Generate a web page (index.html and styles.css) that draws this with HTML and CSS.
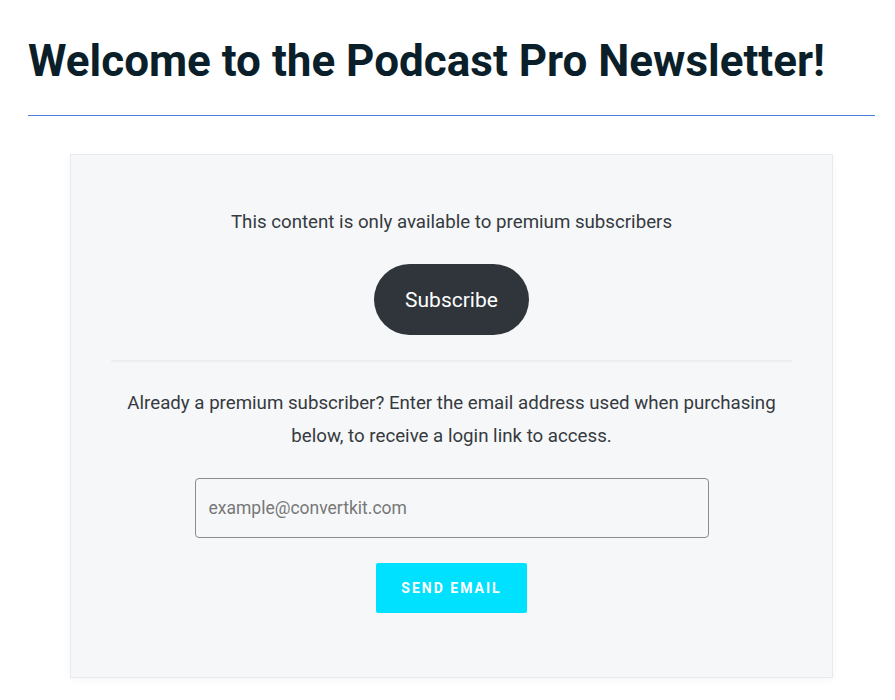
FILE: index.html
```html
<!DOCTYPE html>
<html lang="en">
<head>
<meta charset="utf-8">
<title>Podcast Pro Newsletter</title>
<link rel="stylesheet" href="styles.css">
</head>
<body>
<main class="page">
  <h1 class="title">Welcome to the Podcast Pro Newsletter!</h1>
  <hr class="rule">
  <section class="card">
    <p class="notice">This content is only available to premium subscribers</p>
    <a class="subscribe" href="#">Subscribe</a>
    <div class="divider"></div>
    <p class="info">Already a premium subscriber? Enter the email address used when purchasing below, to receive a login link to access.</p>
    <form class="form">
      <input class="email" type="email" placeholder="example@convertkit.com">
      <button class="send" type="button">SEND EMAIL</button>
    </form>
  </section>
</main>
</body>
</html>
```
FILE: styles.css
```css
* { box-sizing: border-box; }
html, body { margin: 0; padding: 0; background: #ffffff; }
body { font-family: Roboto, "Liberation Sans", Arial, sans-serif; color: #353a40; }
.page { padding: 0 20px 40px 28px; width: 895px; }
.title {
  margin: 0;
  padding-top: 36px;
  font-size: 44px;
  line-height: 50px;
  font-weight: 700;
  color: #0b1f2a;
  letter-spacing: 0;
}
.rule {
  margin: 29px 0 38px;
  border: 0;
  height: 1px;
  background: #4f7ddb;
}
.card {
  width: 763px;
  margin: 0 auto;
  background: #f6f7f9;
  border: 1px solid #e8eaed;
  box-shadow: 0 2px 8px rgba(0, 0, 0, 0.04);
  padding: 51px 40px 64px;
  display: flex;
  flex-direction: column;
  align-items: center;
}
.notice {
  margin: 0;
  font-size: 18.7px;
  line-height: 33px;
  text-align: center;
}
.subscribe {
  margin-top: 25px;
  display: flex;
  align-items: center;
  justify-content: center;
  width: 155px;
  height: 71px;
  border-radius: 36px;
  background: #30353c;
  color: #ffffff;
  font-size: 21px;
  text-decoration: none;
}
.divider {
  align-self: stretch;
  height: 2px;
  background: #eceef0;
  margin-top: 25px;
}
.info {
  margin: 25px 0 0;
  max-width: 680px;
  font-size: 18.7px;
  line-height: 33px;
  text-align: center;
}
.form {
  margin-top: 25px;
  display: flex;
  flex-direction: column;
  align-items: center;
  gap: 25px;
}
.email {
  width: 514px;
  height: 60px;
  border: 1px solid #8c8c8c;
  border-radius: 4px;
  background: transparent;
  padding: 0 13px;
  font-family: Roboto, "Liberation Sans", Arial, sans-serif;
  font-size: 17.5px;
  color: #353a40;
}
.email::placeholder { color: #777777; }
.send {
  width: 151px;
  height: 50px;
  border: 0;
  border-radius: 2px;
  background: #00e0ff;
  color: #ffffff;
  font-family: Roboto, "Liberation Sans", Arial, sans-serif;
  font-size: 14px;
  font-weight: 700;
  letter-spacing: 2px;
  padding: 0;
}
```
